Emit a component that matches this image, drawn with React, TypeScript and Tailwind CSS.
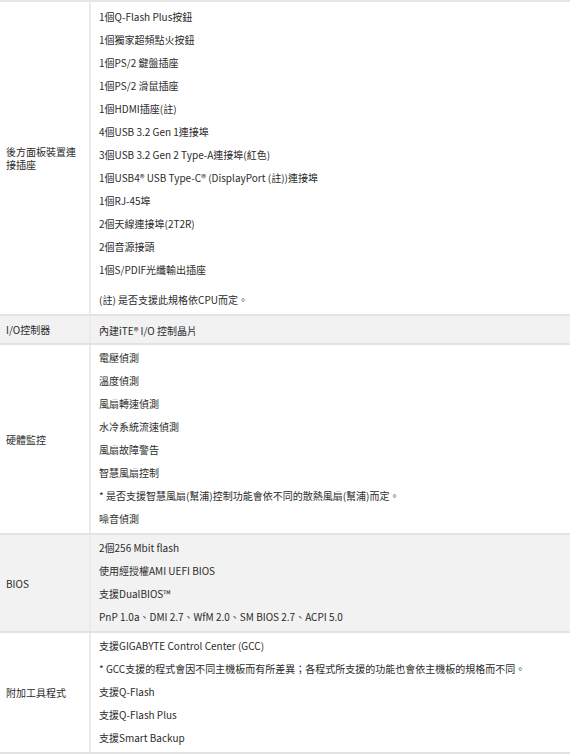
import React from "react"

type Row = {
    label: string,
    items: string[],
    note?: string,
    gray?: boolean,
    pad: string,
}

const rows: Row[] = [
    {
        label: "後方面板裝置連接插座",
        pad: "pt-[3px] pb-[3px]",
        items: [
            "1個Q-Flash Plus按鈕",
            "1個獨家超頻點火按鈕",
            "1個PS/2 鍵盤插座",
            "1個PS/2 滑鼠插座",
            "1個HDMI插座(註)",
            "4個USB 3.2 Gen 1連接埠",
            "3個USB 3.2 Gen 2 Type-A連接埠(紅色)",
            "1個USB4® USB Type-C® (DisplayPort (註))連接埠",
            "1個RJ-45埠",
            "2個天線連接埠(2T2R)",
            "2個音源接頭",
            "1個S/PDIF光纖輸出插座",
        ],
        note: "(註) 是否支援此規格依CPU而定。",
    },
    { label: "I/O控制器", gray: true, pad: "pt-[3px] pb-[1px]", items: ["內建iTE® I/O 控制晶片"] },
    {
        label: "硬體監控",
        pad: "pt-[1px] pb-[3px]",
        items: [
            "電壓偵測",
            "溫度偵測",
            "風扇轉速偵測",
            "水冷系統流速偵測",
            "風扇故障警告",
            "智慧風扇控制",
            "* 是否支援智慧風扇(幫浦)控制功能會依不同的散熱風扇(幫浦)而定。",
            "噪音偵測",
        ],
    },
    {
        label: "BIOS",
        gray: true,
        pad: "pt-[1px] pb-[3px]",
        items: [
            "2個256 Mbit flash",
            "使用經授權AMI UEFI BIOS",
            "支援DualBIOS™",
            "PnP 1.0a、DMI 2.7、WfM 2.0、SM BIOS 2.7、ACPI 5.0",
        ],
    },
    {
        label: "附加工具程式",
        pad: "pt-[1px] pb-[3px]",
        items: [
            "支援GIGABYTE Control Center (GCC)",
            "* GCC支援的程式會因不同主機板而有所差異；各程式所支援的功能也會依主機板的規格而不同。",
            "支援Q-Flash",
            "支援Q-Flash Plus",
            "支援Smart Backup",
        ],
    },
]

export default function App() {
    return (
        <div
            className="w-[570px] h-[754px] overflow-hidden bg-white text-[#2b2b2b] text-[10px] leading-[23px] border-t-2 border-[#e6e6e6]"
            style={{ fontFamily: '"Noto Sans CJK TC", "Noto Sans", sans-serif' }}
        >
            {rows.map((row, index) => (
                <div
                    key={index}
                    className={`flex border-b-2 border-[#e3e3e3] ${row.gray ? "bg-[#f2f2f2]" : "bg-white"}`}
                >
                    {/* Label */}
                    <div className="w-[91px] flex-shrink-0 border-r-2 border-[#ebebeb] px-[6px] flex items-center">
                        <span className="leading-[13px] break-all">{row.label}</span>
                    </div>

                    {/* Values */}
                    <div className={`flex-1 pl-[8px] ${row.pad}`}>
                        {row.items.map((item, i) => (
                            <div key={i} className="whitespace-nowrap">{item}</div>
                        ))}
                        {row.note && (
                            <div className="mt-[7px] whitespace-nowrap">{row.note}</div>
                        )}
                    </div>
                </div>
            ))}
        </div>
    )
}
